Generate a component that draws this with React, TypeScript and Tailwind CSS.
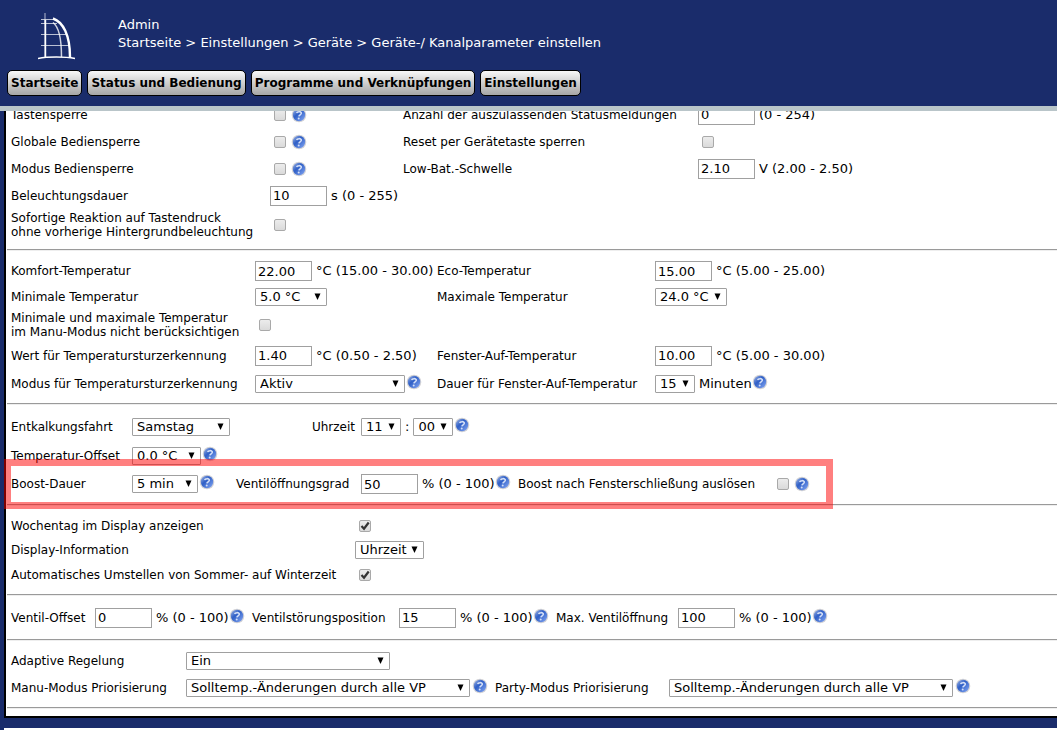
import React, { useId, useState } from "react";
import clsx from "clsx";

const navItems = [
  "Startseite",
  "Status und Bedienung",
  "Programme und Verknüpfungen",
  "Einstellungen",
];

function Logo() {
  return (
    <svg width="38" height="48" viewBox="0 0 38 48" fill="none" stroke="#fff">
      <path d="M7 1V12" strokeWidth="1.500" opacity=".45" />
      <path d="M3 7.500H17M3 11.500H19M3 22.500H28M3 33.500H32" strokeWidth="1" opacity=".7" />
      <path d="M15 6.500C25 10 32 23 32 45" strokeWidth="2.400" />
      <path d="M15 10.500C21 15 23.500 26 23.500 45" strokeWidth="1.500" opacity=".8" />
      <path d="M7.300 8V45" strokeWidth="1.800" />
      <path d="M0 46.500C10 44.500 27 44.500 37 46.500" strokeWidth="1.500" />
    </svg>
  );
}

function Help({ className }: { className?: string }) {
  const id = useId();
  return (
    <button
      type="button"
      aria-label="Hilfe"
      className={clsx("size-4 shrink-0 cursor-pointer", className)}
    >
      <svg viewBox="0 0 16 16" className="size-4">
        <defs>
          <linearGradient id={id} x1="0" y1="0" x2="1" y2="1">
            <stop offset="0" stopColor="#a9bce6" />
            <stop offset=".4" stopColor="#2f5fc6" />
            <stop offset="1" stopColor="#86a8f4" />
          </linearGradient>
        </defs>
        <circle cx="8" cy="8" r="7.300" fill="#d3d3d6" />
        <circle cx="8" cy="8" r="6.200" fill={`url(#${id})`} />
        <path
          d="M5.800 6.200C6 4.300 10.500 4 10.300 6.300C10.200 7.800 8.100 7.800 7.900 9.400"
          fill="none"
          stroke="#d5e0f8"
          strokeWidth="1.600"
        />
        <circle cx="7.700" cy="11.500" r="1" fill="#d5e0f8" />
      </svg>
    </button>
  );
}

interface LabelProps {
  htmlFor: string;
  className?: string;
  children: React.ReactNode;
}

function Label({ htmlFor, className, children }: LabelProps) {
  return (
    <label
      htmlFor={htmlFor}
      className={clsx("whitespace-nowrap text-[12px] leading-[14px]", className)}
    >
      {children}
    </label>
  );
}

function Cell({ children }: { children: React.ReactNode }) {
  return <div className="flex items-center whitespace-nowrap">{children}</div>;
}

function Check({ id, checked = false }: { id: string; checked?: boolean }) {
  const [on, setOn] = useState(checked);
  return (
    <span className="relative mx-1 size-3 shrink-0">
      <input
        id={id}
        type="checkbox"
        checked={on}
        onChange={() => setOn(!on)}
        className="block size-3 appearance-none rounded-xs border border-[#a9a9a9] bg-linear-to-b from-[#ececec] to-[#dadada]"
      />
      {on && (
        <svg viewBox="0 0 12 12" className="pointer-events-none absolute inset-0 size-3">
          <path d="M2.500 6L5 8.700L9.700 2.500" fill="none" stroke="#333" strokeWidth="2.200" />
        </svg>
      )}
    </span>
  );
}

function Field({ id, value, unit }: { id: string; value: string; unit: string }) {
  return (
    <>
      <input
        id={id}
        type="text"
        defaultValue={value}
        className="h-5 w-[57px] shrink-0 border border-[#a0a0a0] bg-white px-0.5"
      />
      <span className="ml-1">{unit}</span>
    </>
  );
}

interface DropdownProps {
  id: string;
  value: string;
  width: string;
  label?: string;
}

function Dropdown({ id, value, width, label }: DropdownProps) {
  return (
    <span className={clsx("relative shrink-0", width)}>
      <select
        id={id}
        aria-label={label}
        className="block h-[18px] w-full appearance-none rounded-[1px] border border-[#a0a0a0] bg-white pl-1 leading-4"
      >
        <option>{value}</option>
      </select>
      <svg
        viewBox="0 0 7 7"
        className="pointer-events-none absolute right-1.5 top-[5px] size-[7px]"
      >
        <path d="M0.500 0.500H6.500L3.500 7Z" fill="#000" />
      </svg>
    </span>
  );
}

function Line() {
  return <hr className="ml-px h-0.5 border-b border-t border-b-[#eee] border-t-[#9a9a9a]" />;
}

export default function App() {
  return (
    <div className="overflow-hidden bg-[#1a2c6b] font-[Verdana,'DejaVu_Sans',sans-serif] text-[13px] leading-[18px] text-black">
      <header className="relative z-20 h-[111px] border-b-[5px] border-[#b9c5c9] bg-[#1a2c6b]">
        <div className="flex h-[70px] text-white">
          <a href="#" aria-label="Startseite" className="ml-[38px] mt-3 w-20">
            <Logo />
          </a>
          <div className="pt-4">
            <p>Admin</p>
            <p className="whitespace-nowrap">
              Startseite &gt; Einstellungen &gt; Geräte &gt; Geräte-/ Kanalparameter einstellen
            </p>
          </div>
        </div>
        <nav className="flex gap-[5px] pl-[7px]">
          {navItems.map((item) => (
            <button
              key={item}
              type="button"
              className="h-[26px] cursor-pointer whitespace-nowrap rounded-[5px] border border-black bg-linear-to-b from-[#f8f8f8] to-[#a6a6a6] px-[3px] text-[12px] font-bold"
            >
              {item}
            </button>
          ))}
        </nav>
      </header>

      <main className="-mt-2.5 ml-1 border-b-2 border-l-2 border-black bg-white pb-[7px]">
        <section className="mb-2 grid grid-cols-[259px_133px_295px_auto] grid-rows-[27px_27px_27px_27px_32px] items-center justify-start pl-[5px]">
          <Label htmlFor="tasten">Tastensperre</Label>
          <Cell>
            <Check id="tasten" />
            <Help className="ml-px" />
          </Cell>
          <Label htmlFor="status">Anzahl der auszulassenden Statusmeldungen</Label>
          <Cell>
            <Field id="status" value="0" unit="(0 - 254)" />
          </Cell>
          <Label htmlFor="global">Globale Bediensperre</Label>
          <Cell>
            <Check id="global" />
            <Help className="ml-px" />
          </Cell>
          <Label htmlFor="reset">Reset per Gerätetaste sperren</Label>
          <Cell>
            <Check id="reset" />
          </Cell>
          <Label htmlFor="modus">Modus Bediensperre</Label>
          <Cell>
            <Check id="modus" />
            <Help className="ml-px" />
          </Cell>
          <Label htmlFor="lowbat">Low-Bat.-Schwelle</Label>
          <Cell>
            <Field id="lowbat" value="2.10" unit="V (2.00 - 2.50)" />
          </Cell>
          <Label htmlFor="licht">Beleuchtungsdauer</Label>
          <Cell>
            <Field id="licht" value="10" unit="s (0 - 255)" />
          </Cell>
          <Label htmlFor="sofort" className="col-start-1">
            Sofortige Reaktion auf Tastendruck
            <br />
            ohne vorherige Hintergrundbeleuchtung
          </Label>
          <Cell>
            <Check id="sofort" />
          </Cell>
        </section>
        <Line />

        <section className="mb-1.5 mt-[7px] grid grid-cols-[244px_182px_218px_auto] grid-rows-[26px_25px_32px_29px_27px] items-center justify-start pl-[5px]">
          <Label htmlFor="komfort">Komfort-Temperatur</Label>
          <Cell>
            <Field id="komfort" value="22.00" unit="°C (15.00 - 30.00)" />
          </Cell>
          <Label htmlFor="eco">Eco-Temperatur</Label>
          <Cell>
            <Field id="eco" value="15.00" unit="°C (5.00 - 25.00)" />
          </Cell>
          <Label htmlFor="min">Minimale Temperatur</Label>
          <Dropdown id="min" value="5.0 °C" width="w-[72px]" />
          <Label htmlFor="max">Maximale Temperatur</Label>
          <Dropdown id="max" value="24.0 °C" width="w-[72px]" />
          <Label htmlFor="manu">
            Minimale und maximale Temperatur
            <br />
            im Manu-Modus nicht berücksichtigen
          </Label>
          <Cell>
            <Check id="manu" />
          </Cell>
          <Label htmlFor="sturz" className="col-start-1">
            Wert für Temperatursturzerkennung
          </Label>
          <Cell>
            <Field id="sturz" value="1.40" unit="°C (0.50 - 2.50)" />
          </Cell>
          <Label htmlFor="fenster">Fenster-Auf-Temperatur</Label>
          <Cell>
            <Field id="fenster" value="10.00" unit="°C (5.00 - 30.00)" />
          </Cell>
          <Label htmlFor="sturzmodus">Modus für Temperatursturzerkennung</Label>
          <Cell>
            <Dropdown id="sturzmodus" value="Aktiv" width="w-[150px]" />
            <Help className="mb-1 ml-px" />
          </Cell>
          <Label htmlFor="dauer">Dauer für Fenster-Auf-Temperatur</Label>
          <Cell>
            <Dropdown id="dauer" value="15" width="w-10" />
            <span className="ml-1">Minuten</span>
            <Help className="mb-1" />
          </Cell>
        </section>
        <Line />

        <section className="relative mb-1.5 mt-[7px] grid grid-cols-[121px_104px_125px_157px_255px_auto] grid-rows-[29px_29px_28px] items-center justify-start pl-[5px]">
          <Label htmlFor="entkalk">Entkalkungsfahrt</Label>
          <Dropdown id="entkalk" value="Samstag" width="w-[98px]" />
          <Label htmlFor="stunde" className="pr-1.5 text-right">
            Uhrzeit
          </Label>
          <Cell>
            <Dropdown id="stunde" value="11" width="w-10" />
            <span className="mx-1">:</span>
            <Dropdown id="minute" value="00" width="w-10" label="Minute" />
            <Help className="mb-1 ml-px" />
          </Cell>
          <Label htmlFor="offset" className="col-start-1">
            Temperatur-Offset
          </Label>
          <Cell>
            <Dropdown id="offset" value="0.0 °C" width="w-[69px]" />
            <Help className="mb-1 ml-px" />
          </Cell>
          <Label htmlFor="boost" className="col-start-1">
            Boost-Dauer
          </Label>
          <Cell>
            <Dropdown id="boost" value="5 min" width="w-[66px]" />
            <Help className="mb-1 ml-px" />
          </Cell>
          <Label htmlFor="grad">Ventilöffnungsgrad</Label>
          <Cell>
            <Field id="grad" value="50" unit="% (0 - 100)" />
            <Help className="mb-1" />
          </Cell>
          <Label htmlFor="schliess">Boost nach Fensterschließung auslösen</Label>
          <Cell>
            <Check id="schliess" />
            <Help className="ml-px" />
          </Cell>
          <div className="pointer-events-none absolute -bottom-[11px] -left-0.5 z-10 h-[50px] w-[829px] border-[7px] border-[#ff0000]/50" />
        </section>
        <Line />

        <section className="my-[7px] grid grid-cols-[344px_auto] grid-rows-[25px_24px_25px] items-center justify-start pl-[5px]">
          <Label htmlFor="wochentag">Wochentag im Display anzeigen</Label>
          <Check id="wochentag" checked />
          <Label htmlFor="display">Display-Information</Label>
          <Dropdown id="display" value="Uhrzeit" width="w-[69px]" />
          <Label htmlFor="sommer">Automatisches Umstellen von Sommer- auf Winterzeit</Label>
          <Check id="sommer" checked />
        </section>
        <Line />

        <section className="my-[7px] grid grid-cols-[84px_157px_147px_157px_122px_auto] grid-rows-[29px] items-center justify-start pl-[5px]">
          <Label htmlFor="ventil">Ventil-Offset</Label>
          <Cell>
            <Field id="ventil" value="0" unit="% (0 - 100)" />
            <Help className="mb-1" />
          </Cell>
          <Label htmlFor="stoerung">Ventilstörungsposition</Label>
          <Cell>
            <Field id="stoerung" value="15" unit="% (0 - 100)" />
            <Help className="mb-1" />
          </Cell>
          <Label htmlFor="maxventil">Max. Ventilöffnung</Label>
          <Cell>
            <Field id="maxventil" value="100" unit="% (0 - 100)" />
            <Help className="mb-1" />
          </Cell>
        </section>
        <Line />

        <section className="mb-1.5 mt-[7px] grid grid-cols-[175px_309px_174px_auto] grid-rows-[26px_27px] items-center justify-start pl-[5px]">
          <Label htmlFor="adaptiv">Adaptive Regelung</Label>
          <Dropdown id="adaptiv" value="Ein" width="w-[204px]" />
          <Label htmlFor="manuprio" className="col-start-1">
            Manu-Modus Priorisierung
          </Label>
          <Cell>
            <Dropdown id="manuprio" value="Solltemp.-Änderungen durch alle VP" width="w-[284px]" />
            <Help className="mb-1 ml-0.5" />
          </Cell>
          <Label htmlFor="partyprio">Party-Modus Priorisierung</Label>
          <Cell>
            <Dropdown id="partyprio" value="Solltemp.-Änderungen durch alle VP" width="w-[284px]" />
            <Help className="mb-1 ml-0.5" />
          </Cell>
        </section>
        <Line />
      </main>
      <footer className="ml-1 mt-2.5 h-4 bg-white" />
    </div>
  );
}
